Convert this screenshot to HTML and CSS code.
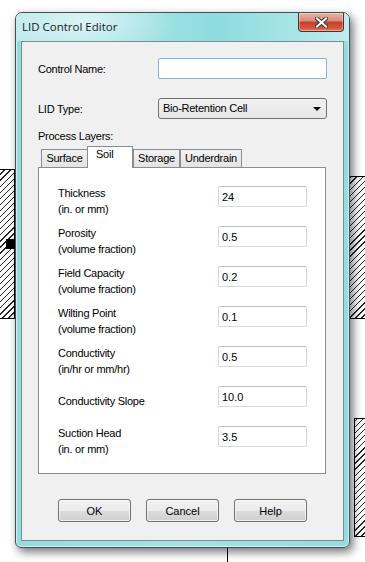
FILE: index.html
```html
<!DOCTYPE html>
<html lang="en">
<head>
  <meta charset="UTF-8">
  <title>LID Control Editor</title>
  <link rel="stylesheet" href="styles.css">
</head>
<body>
  <!-- Map canvas behind the dialog -->
  <div class="hatch hatch-left"></div>
  <div class="node-marker"></div>
  <div class="hatch hatch-right"></div>
  <div class="hatch hatch-right-low"></div>
  <div class="link-line"></div>

  <div class="window">
    <div class="titlebar">
      <span class="title">LID Control Editor</span>
      <button class="close-btn" aria-label="Close">
        <svg width="13" height="11" viewBox="0 0 13 11">
          <path d="M2 1.5 L11 9.5 M11 1.5 L2 9.5" stroke="#3a3a3a" stroke-width="4" stroke-linecap="square"/>
          <path d="M2 1.5 L11 9.5 M11 1.5 L2 9.5" stroke="#ffffff" stroke-width="2" stroke-linecap="square"/>
        </svg>
      </button>
    </div>

    <div class="client">
      <div class="field-row first">
        <label for="control-name">Control Name:</label>
        <input type="text" id="control-name" class="name-input">
      </div>
      <div class="field-row second">
        <label>LID Type:</label>
        <div class="combo">Bio-Retention Cell<span class="combo-arrow"></span></div>
      </div>

      <div class="layers-label">Process Layers:</div>

      <!-- Tabs for each process layer -->
      <div class="tabs">
        <div class="tab tab-surface">Surface</div>
        <div class="tab tab-soil active">Soil</div>
        <div class="tab tab-storage">Storage</div>
        <div class="tab tab-underdrain">Underdrain</div>
      </div>

      <div class="tab-panel">
        <div class="param-row">
          <div class="param-label"><span>Thickness</span><span>(in. or mm)</span></div>
          <input type="text" class="param-input" value="24">
        </div>
        <div class="param-row">
          <div class="param-label"><span>Porosity</span><span>(volume fraction)</span></div>
          <input type="text" class="param-input" value="0.5">
        </div>
        <div class="param-row">
          <div class="param-label"><span>Field Capacity</span><span>(volume fraction)</span></div>
          <input type="text" class="param-input" value="0.2">
        </div>
        <div class="param-row">
          <div class="param-label"><span>Wilting Point</span><span>(volume fraction)</span></div>
          <input type="text" class="param-input" value="0.1">
        </div>
        <div class="param-row">
          <div class="param-label"><span>Conductivity</span><span>(in/hr or mm/hr)</span></div>
          <input type="text" class="param-input" value="0.5">
        </div>
        <div class="param-row">
          <div class="param-label"><span>Conductivity Slope</span></div>
          <input type="text" class="param-input" value="10.0">
        </div>
        <div class="param-row">
          <div class="param-label"><span>Suction Head</span><span>(in. or mm)</span></div>
          <input type="text" class="param-input" value="3.5">
        </div>
      </div>

      <div class="buttons">
        <button class="dlg-btn">OK</button>
        <button class="dlg-btn">Cancel</button>
        <button class="dlg-btn">Help</button>
      </div>
    </div>
  </div>
</body>
</html>
```

FILE: styles.css
```css
/* Desktop / map canvas */
body {
  margin: 0;
  width: 365px;
  height: 562px;
  overflow: hidden;
  position: relative;
  background: #fff;
  font-family: "Liberation Sans", Arial, sans-serif;
  font-size: 11px;
  letter-spacing: -0.25px;
  color: #000;
}
.hatch {
  position: absolute;
  box-sizing: border-box;
  border: 1px solid #000;
  background: repeating-linear-gradient(-45deg, #fff 0 3.4px, #222 3.4px 4.3px);
}
.hatch-left {
  left: -1px;
  top: 169px;
  width: 16px;
  height: 150px;
}
.node-marker {
  position: absolute;
  left: 6px;
  top: 239px;
  width: 9px;
  height: 10px;
  background: #000;
}
.hatch-right {
  left: 348px;
  top: 176px;
  width: 20px;
  height: 143px;
}
.hatch-right-low {
  left: 354px;
  top: 418px;
  width: 14px;
  height: 119px;
}
.link-line {
  position: absolute;
  left: 227px;
  top: 546px;
  width: 1px;
  height: 20px;
  background: #000;
}

/* Dialog window */
.window {
  position: absolute;
  left: 15px;
  top: 12px;
  width: 335px;
  height: 536px;
  box-sizing: border-box;
  border: 1px solid #3f5156;
  border-radius: 7px 7px 6px 6px;
  background: linear-gradient(to right, #95dcdd, #a4e3e4 50%, #95dcdd);
  box-shadow: 3px 4px 10px rgba(0, 0, 0, 0.55), inset 0 0 0 1px rgba(255, 255, 255, 0.55);
  display: flex;
  flex-direction: column;
}
.titlebar {
  height: 28px;
  position: relative;
  border-radius: 6px 6px 0 0;
  background:
    radial-gradient(ellipse 90px 40px at 70px 8px, rgba(255, 255, 255, 0.55), rgba(255, 255, 255, 0)),
    linear-gradient(to right, #bdeaec 0%, #a5e3e5 35%, #8ddcdf 60%, #a9e5e7 85%, #c2ecee 100%);
}
.title {
  position: absolute;
  left: 6px;
  top: 6px;
  font-family: "Open Sans", "Noto Sans", sans-serif;
  font-size: 11.5px;
  letter-spacing: 0;
  line-height: 16px;
  color: #1a1a1a;
}
.close-btn {
  position: absolute;
  right: 5px;
  top: 0;
  width: 46px;
  height: 19px;
  padding: 0;
  border: 1px solid #5a2a22;
  border-top: none;
  border-radius: 0 0 4px 4px;
  background: linear-gradient(to bottom, #e9b3a8 0%, #d88a7a 45%, #c23f26 50%, #cf5a40 85%, #e0856a 100%);
  box-shadow: inset 0 0 0 1px rgba(255, 255, 255, 0.35);
  display: flex;
  align-items: center;
  justify-content: center;
}

/* Client area */
.client {
  flex: 1;
  margin: 0 5px 6px 5px;
  border: 1px solid #7e8c92;
  background: #f0f0f0;
  padding-left: 16px;
}
.field-row {
  display: flex;
  align-items: center;
  height: 21px;
}
.field-row.first {
  margin-top: 16px;
}
.field-row.second {
  margin-top: 19px;
}
.field-row label {
  width: 120px;
}
.name-input {
  box-sizing: border-box;
  width: 169px;
  height: 21px;
  margin: 0;
  border: 1px solid #7eb4ea;
  border-radius: 2px;
  background: #fff;
  outline: none;
}
.combo {
  box-sizing: border-box;
  width: 169px;
  height: 21px;
  position: relative;
  border: 1px solid #707070;
  border-radius: 3px;
  background: linear-gradient(to bottom, #f2f2f2, #e6e6e6);
  padding-left: 4px;
  line-height: 19px;
}
.combo-arrow {
  position: absolute;
  right: 5px;
  top: 8px;
  border-left: 4px solid transparent;
  border-right: 4px solid transparent;
  border-top: 4px solid #000;
}
.layers-label {
  margin-top: 11px;
  line-height: 13px;
}

/* Tabs */
.tabs {
  display: flex;
  align-items: flex-end;
  height: 21px;
  margin-top: 3px;
  margin-left: 3px;
  position: relative;
  z-index: 1;
}
.tab {
  box-sizing: border-box;
  height: 18px;
  border: 1px solid #898c95;
  border-bottom: none;
  background: linear-gradient(to bottom, #f2f2f2, #e3e3e3);
  text-align: center;
  line-height: 17px;
}
.tab-surface { width: 47px; }
.tab-soil { width: 46px; margin-left: -1px; }
.tab-storage { width: 47px; }
.tab-underdrain { width: 62px; }
.tab.active {
  height: 22px;
  margin-bottom: -1px;
  background: #fff;
  text-align: left;
  padding-left: 8px;
  line-height: 14px;
}

.tab-panel {
  box-sizing: border-box;
  width: 288px;
  height: 307px;
  border: 1px solid #898c95;
  background: #fff;
  padding: 18px 0 0 19px;
}
.param-row {
  display: flex;
  align-items: flex-start;
  height: 40px;
}
.param-label {
  width: 160px;
  height: 32px;
  margin-top: -1px;
  display: flex;
  flex-direction: column;
  justify-content: center;
  line-height: 16px;
}
.param-input {
  box-sizing: border-box;
  width: 89px;
  height: 21px;
  margin: 0;
  border: 1px solid #d9d9d9;
  border-top-color: #c2c2c2;
  border-radius: 2px;
  padding: 1px 3px 0;
  font: inherit;
  color: #000;
  background: #fff;
}

/* Dialog buttons */
.buttons {
  display: flex;
  gap: 15px;
  margin-top: 25px;
  margin-left: 20px;
}
.dlg-btn {
  box-sizing: border-box;
  width: 73px;
  height: 23px;
  border: 1px solid #707070;
  border-radius: 3px;
  background: linear-gradient(to bottom, #f2f2f2 0%, #ebebeb 50%, #dddddd 51%, #cfcfcf 100%);
  box-shadow: inset 0 0 0 1px rgba(255, 255, 255, 0.7);
  font: inherit;
  color: #000;
  padding: 0;
}
```
